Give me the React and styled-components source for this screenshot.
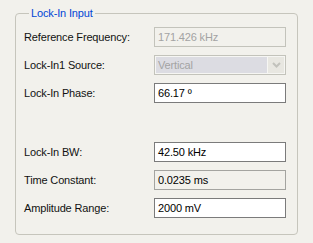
import styled, { createGlobalStyle } from 'styled-components';

const GlobalStyle = createGlobalStyle`
  html, body {
    margin: 0;
    padding: 0;
    background: #f2f1ec;
  }
  body {
    font-family: 'Liberation Sans', Arial, sans-serif;
    font-size: 11px;
    letter-spacing: -0.15px;
    color: #000;
  }
`;

const Page = styled.div`
  box-sizing: border-box;
  width: 313px;
  height: 243px;
  padding: 7px 16px 0 15px;
  background: #f2f1ec;
`;

const GroupBox = styled.fieldset`
  box-sizing: border-box;
  width: 283px;
  height: 228px;
  margin: 0;
  padding: 0 10px 0 8px;
  border: 1px solid #c6c5bc;
  border-radius: 4px;
`;

const Legend = styled.legend`
  margin-left: 5px;
  padding: 0 2px;
  line-height: 13px;
  font-size: 11px;
  color: #0046d5;
`;

const Rows = styled.div`
  display: flex;
  flex-direction: column;
  gap: 8px;
  margin-top: 7px;
`;

const Row = styled.div`
  display: grid;
  grid-template-columns: 130px 132px;
  align-items: center;
  height: 20px;
`;

const Spacer = styled.div`
  height: 23px;
`;

const Label = styled.span`
  line-height: 20px;
  white-space: nowrap;
  color: #111;
`;

const Field = styled.div`
  box-sizing: border-box;
  height: 20px;
  padding: 0 3px;
  line-height: 18px;
  white-space: nowrap;
  border: 1px solid ${(p) => (p.$state === 'edit' ? '#7b7b7b' : p.$state === 'readonly' ? '#a4a4a0' : '#c3c3bb')};
  background: ${(p) => (p.$state === 'edit' ? '#ffffff' : 'transparent')};
  color: ${(p) => (p.$state === 'disabled' ? '#a3a3a3' : '#000')};
`;

const Select = styled.div`
  box-sizing: border-box;
  display: flex;
  height: 20px;
  padding: 1px;
  border: 1px solid #c3c3bb;
  background: #f6f6f3;
`;

const SelectText = styled.div`
  flex: 1;
  padding: 0 2px;
  line-height: 16px;
  background: #dcdce2;
  color: #a3a3a3;
`;

const SelectButton = styled.div`
  display: flex;
  align-items: center;
  justify-content: center;
  width: 16px;
  margin-left: 1px;
  background: #e8e7e1;
`;

const rows = [
  { label: 'Reference Frequency:', value: '171.426 kHz', state: 'disabled' },
  { label: 'Lock-In1 Source:', value: 'Vertical', select: true },
  { label: 'Lock-In Phase:', value: '66.17 º', state: 'edit' },
  { spacer: true },
  { label: 'Lock-In BW:', value: '42.50 kHz', state: 'edit' },
  { label: 'Time Constant:', value: '0.0235 ms', state: 'readonly' },
  { label: 'Amplitude Range:', value: '2000 mV', state: 'edit' },
];

const App = () => {
  return (
    <>
      <GlobalStyle />
      <Page>
        <GroupBox>
          <Legend>Lock-In Input</Legend>
          <Rows>
            {rows.map((r, i) =>
              r.spacer ? (
                <Spacer key={i} />
              ) : (
                <Row key={i}>
                  <Label>{r.label}</Label>
                  {r.select ? (
                    <Select>
                      <SelectText>{r.value}</SelectText>
                      <SelectButton>
                        <svg width="9" height="6" viewBox="0 0 9 6">
                          <path d="M1 1 L4.5 4.5 L8 1" fill="none" stroke="#c2c2bc" strokeWidth="2" />
                        </svg>
                      </SelectButton>
                    </Select>
                  ) : (
                    <Field $state={r.state}>{r.value}</Field>
                  )}
                </Row>
              )
            )}
          </Rows>
        </GroupBox>
      </Page>
    </>
  );
};

export default App;
